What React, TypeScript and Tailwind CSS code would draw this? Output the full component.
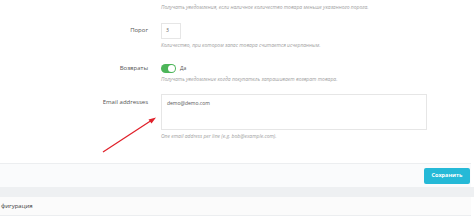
import React from "react";

export default function App() {
  return (
    <div
      className="relative w-[474px] h-[219px] overflow-hidden bg-white"
      style={{ fontFamily: '"Open Sans", "Noto Sans", sans-serif' }}
    >
      <div className="pt-[4px]">
        {/* help 1 */}
        <div className="flex">
          <div className="w-[148px] shrink-0" />
          <div className="ml-[13px] text-[5px] leading-[6px] italic text-[#a0a0a0] whitespace-nowrap">
            Получать уведомления, если наличное количество товара меньше указанного порога.
          </div>
        </div>

        {/* Порог */}
        <div className="flex mt-[13px]">
          <div className="w-[148px] shrink-0 text-right pt-[3px] text-[6px] leading-[8px] text-[#555]">
            Порог
          </div>
          <div className="ml-[13px]">
            <div className="w-[20px] h-[16px] border border-[#e6e6e6] bg-white flex items-center pl-[4px] text-[5px] text-[#555]">
              3
            </div>
          </div>
        </div>
        <div className="flex mt-[3px]">
          <div className="w-[148px] shrink-0" />
          <div className="ml-[13px] text-[5px] leading-[6px] italic text-[#a0a0a0] whitespace-nowrap">
            Количество, при котором запас товара считается исчерпанным.
          </div>
        </div>

        {/* Возвраты */}
        <div className="flex mt-[16px]">
          <div className="w-[148px] shrink-0 text-right text-[6px] leading-[9px] text-[#555]">
            Возвраты
          </div>
          <div className="ml-[13px] flex items-center gap-[4px]">
            <div className="w-[15px] h-[9px] rounded-full bg-[#4cb559] flex items-center justify-end pr-[1px]">
              <div className="w-[7px] h-[7px] rounded-full bg-white" />
            </div>
            <span className="text-[5px] leading-[9px] text-[#555]">Да</span>
          </div>
        </div>
        <div className="flex mt-[3px]">
          <div className="w-[148px] shrink-0" />
          <div className="ml-[13px] text-[5px] leading-[6px] italic text-[#a0a0a0] whitespace-nowrap">
            Получать уведомление когда покупатель запрашивает возврат товара.
          </div>
        </div>

        {/* Email */}
        <div className="flex mt-[12px]">
          <div className="w-[148px] shrink-0 text-right pt-[4px] text-[6px] leading-[8px] text-[#555]">
            Email addresses
          </div>
          <div className="ml-[13px]">
            <div className="w-[266px] h-[36px] border border-[#e6e6e6] bg-white pl-[5px] pt-[5px] text-[5px] leading-[6px] text-[#555]">
              demo@demo.com
            </div>
          </div>
        </div>
        <div className="flex mt-[3px]">
          <div className="w-[148px] shrink-0" />
          <div className="ml-[13px] text-[5px] leading-[6px] italic text-[#a0a0a0] whitespace-nowrap">
            One email address per line (e.g. bob@example.com).
          </div>
        </div>
      </div>

      {/* footer */}
      <div className="mt-[24px] w-[471px] h-[24px] bg-[#fafbfc] border-t border-[#eceef0] flex items-center justify-end pr-[1px]">
        <div className="w-[46px] h-[16px] rounded-[2px] bg-[#25b9d7] flex items-center justify-center text-white text-[5.5px] font-bold">
          Сохранить
        </div>
      </div>
      <div className="h-[10px] bg-[#eef0f2]" />
      <div className="h-[19px] w-[471px] bg-[#fbfbfb] border-b border-[#eceef0] flex items-center pl-[1px]">
        <span className="text-[6px] text-[#3a3a3a] whitespace-nowrap">фигурация</span>
      </div>

      {/* red arrow */}
      <svg
        className="absolute left-0 top-0 pointer-events-none"
        width="474"
        height="219"
        viewBox="0 0 474 219"
      >
        <line x1="103" y1="152" x2="152" y2="120" stroke="#e0202a" strokeWidth="1.3" />
        <polygon points="156,117.5 148.5,119.5 151.5,123.5" fill="#e0202a" />
      </svg>
    </div>
  );
}
